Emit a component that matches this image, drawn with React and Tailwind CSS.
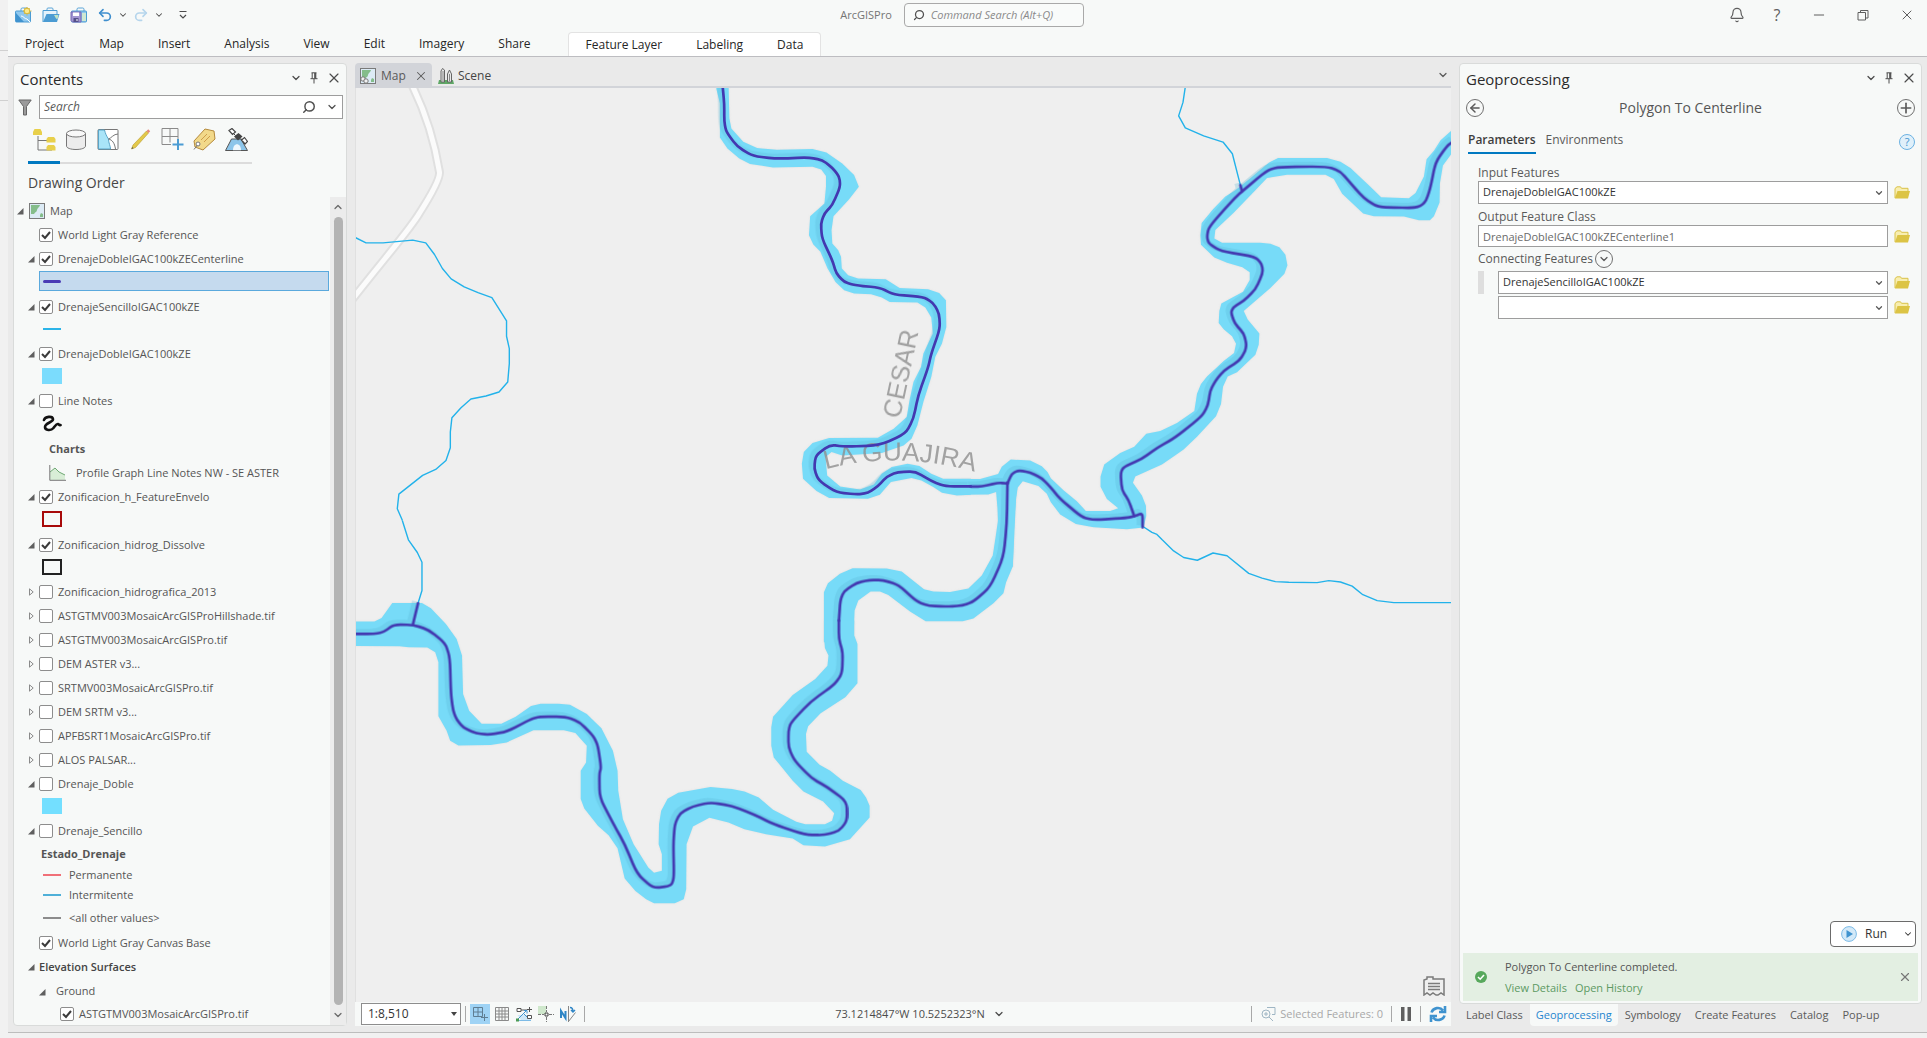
import React from "react";
import { ChevronDown, ChevronUp, Search, X, Bell, Minus, Plus, ArrowLeft, Undo2, Redo2 } from "lucide-react";

const Caret = ({ className = "size-3" }) => <ChevronDown aria-hidden="true" strokeWidth={2.5} className={className} />;

const SearchGlyph = ({ className = "size-4" }) => (
  <Search aria-hidden="true" strokeWidth={2.5} className={`-scale-x-100 text-[#505050] ${className}`} />
);

const PinIcon = () => (
  <svg viewBox="0 0 12 12" className="size-3" fill="none" stroke="#4c4c4c">
    <path d="M3.5 .8h5M4.2 1v5.5M7.8 1v5.5M2.5 6.7h7M6 7v4.5" />
    <path d="M7 1v5.5" strokeWidth="1.6" />
  </svg>
);

const CaseBase = () => (
  <>
    <path d="M7 4V2.2C7 1.5 7.500 1 8.200 1h4.600C13.500 1 14 1.500 14 2.200V4" fill="none" stroke="#5aa5d8" />
    <rect x="1.500" y="4" width="15" height="11" rx=".8" fill="#8fc8ee" stroke="#4b9cd3" />
  </>
);

const NewProjectIcon = () => (
  <svg viewBox="0 0 18 16" className="h-4 w-[18px]">
    <CaseBase />
    <path d="M2 15V6l8 9Z" fill="#3f93cf" />
    <path d="M7 9c3 0 3 3 6 3l3 3" fill="none" stroke="#fff" />
    <circle cx="13" cy="4" r="2.800" fill="#fbe98a" stroke="#d9b632" />
    <path d="M13 0v1M13 7.500v1M9 4h1M16.500 4h1M10.200 1.200l.7.7M15.200 6.200l.7.7M15.800 1.200l-.7.7M10.800 6.200l-.7.7" stroke="#d9b632" />
  </svg>
);

const OpenProjectIcon = () => (
  <svg viewBox="0 0 18 16" className="h-4 w-[18px]">
    <path d="M5 3V2c0-.6.400-1 1-1h4c.6 0 1 .4 1 1v1" fill="none" stroke="#5aa5d8" />
    <path d="M1 15V3.500h14V7" fill="#e4f2fb" stroke="#4b9cd3" />
    <path d="M1 15 4.500 7H17.500L15 15Z" fill="#4b9cd3" />
    <path d="M12 8h4.500l-1 4c-2 0-2-2-3.500-4Z" fill="#bfe3c4" />
  </svg>
);

const SaveProjectIcon = () => (
  <svg viewBox="0 0 18 16" className="h-4 w-[18px]">
    <CaseBase />
    <path d="M12 6h4v8h-4z" fill="#cfe8d2" />
    <path d="M1 5h10v10H2.500L1 13.500Z" fill="#a296d2" stroke="#7467b3" />
    <path d="M3 5.500h6v3.500H3z" fill="#fff" />
    <path d="M3.500 11h5v4h-5z" fill="#55508a" />
    <path d="M6.500 12h1v2h-1z" fill="#fff" />
  </svg>
);

const MapThumb = ({ link = false }) => (
  <svg viewBox="0 0 16 16" className="size-4 shrink-0">
    <rect x=".5" y=".5" width="15" height="15" fill="#dcebf5" stroke="#7a7a7a" />
    <path d="M2 2h9c0 2-3 3-3 5s-2 2-3 4H2Z" fill="#84bd8a" />
    <path d="M12 10l2 1v3h-3v-2Z" fill="#84bd8a" />
    {link && (
      <g fill="#f2f2f2" stroke="#777">
        <circle cx="3" cy="11" r="2.200" />
        <circle cx="6" cy="13" r="2.200" />
      </g>
    )}
  </svg>
);

const SceneIcon = () => (
  <svg viewBox="0 0 16 16" className="size-4 shrink-0">
    <path d="M1 12h14l1 4H0Z" fill="#5fa866" />
    <path d="M3 14V3l1.500-2.500L6.500 2v12ZM9.500 14V6l2-4 2 4v8Z" fill="#e8e8e8" stroke="#666" />
    <path d="M5 3v10M11.500 6v7" stroke="#888" />
  </svg>
);

const Folder = () => (
  <svg viewBox="0 0 16 13" className="h-[13px] w-4">
    <path d="M1 12V2.500L3 .8h3.500l1 1.500H14V5" fill="#f8eeb0" stroke="#d9c24a" />
    <path d="M.8 12.500 3.500 5H16l-2 7.500Z" fill="#dcc445" />
  </svg>
);

/* ---------- title bar and ribbon tabs ---------- */

function IconButton({ label, className = "", children }) {
  return (
    <button type="button" aria-label={label} className={`flex items-center justify-center ${className}`}>
      {children}
    </button>
  );
}

function TitleBar() {
  return (
    <div className="flex h-[30px] items-center pl-px pr-3">
      <div className="flex flex-1 items-center">
        <IconButton label="New project" className="w-7"><NewProjectIcon /></IconButton>
        <IconButton label="Open project" className="w-7"><OpenProjectIcon /></IconButton>
        <IconButton label="Save project" className="w-7"><SaveProjectIcon /></IconButton>
        <IconButton label="Undo" className="w-6 text-[#3f8fce]"><Undo2 strokeWidth={2.5} className="size-4" /></IconButton>
        <IconButton label="Undo list" className="w-3 text-[#4c4c4c]"><Caret className="size-2.5" /></IconButton>
        <IconButton label="Redo" className="w-6 text-[#b5d5ec]"><Redo2 strokeWidth={2.5} className="size-4" /></IconButton>
        <IconButton label="Redo list" className="w-3 text-[#4c4c4c]"><Caret className="size-2.5" /></IconButton>
        <IconButton label="Customize toolbar" className="ml-2 w-5 text-[#4c4c4c]">
          <svg viewBox="0 0 10 10" className="size-2.5" fill="none" stroke="currentColor">
            <path d="M1.500 1.500h7M2 5l3 3 3-3" strokeWidth="1.200" />
          </svg>
        </IconButton>
      </div>
      <div className="flex items-center gap-3">
        <span className="text-[11px] text-[#757575]">ArcGISPro</span>
        <label className="flex h-6 w-[180px] items-center gap-1.5 rounded-sm border border-[#a9a9a9] bg-[#f9fbfa] px-2">
          <SearchGlyph className="size-3" />
          <input
            type="text"
            aria-label="Command search"
            placeholder="Command Search (Alt+Q)"
            className="min-w-0 flex-1 bg-transparent text-[11px] italic outline-none placeholder:text-[#8a8a8a]"
          />
        </label>
      </div>
      <div className="flex flex-1 items-center justify-end text-[#5e5e5e]">
        <IconButton label="Notifications" className="w-10"><Bell strokeWidth={1.75} className="size-4" /></IconButton>
        <IconButton label="Help" className="w-10 text-base">?</IconButton>
        <IconButton label="Minimize" className="w-11"><Minus strokeWidth={1.5} className="size-4" /></IconButton>
        <IconButton label="Restore" className="w-11">
          <svg viewBox="0 0 12 12" className="size-3" fill="none" stroke="currentColor">
            <path d="M1 3.500h7.500V11H1zM3.500 3.500V1.500H11V9H8.500" />
          </svg>
        </IconButton>
        <IconButton label="Close" className="w-[30px] justify-end"><X strokeWidth={1.5} className="size-4" /></IconButton>
      </div>
    </div>
  );
}

const MAIN_TABS = ["Map", "Insert", "Analysis", "View", "Edit", "Imagery", "Share"];
const CONTEXT_TABS = ["Feature Layer", "Labeling", "Data"];

function Ribbon() {
  return (
    <nav className="flex h-[27px] items-stretch border-b border-[#bdbdc1] pt-0.5 text-xs text-[#262626]">
      <button type="button" className="mr-px px-[17px]">Project</button>
      {MAIN_TABS.map((t) => (
        <button key={t} type="button" className="px-[17px]">{t}</button>
      ))}
      <div className="ml-5 flex rounded-t-sm border border-b-0 border-[#e3e3e3] bg-white">
        {CONTEXT_TABS.map((t) => (
          <button key={t} type="button" className="px-[17px]">{t}</button>
        ))}
      </div>
    </nav>
  );
}

/* ---------- contents pane ---------- */

function PaneHeader({ title }) {
  return (
    <div className="flex h-[31px] items-center justify-between pl-1.5 pr-1">
      <h2 className="text-[15px] text-[#2b2b2b]">{title}</h2>
      <div className="flex items-center gap-1.5 pb-1 text-[#4c4c4c]">
        <IconButton label={`${title} options`}><Caret /></IconButton>
        <IconButton label={`Pin ${title}`}><PinIcon /></IconButton>
        <IconButton label={`Close ${title}`}><X strokeWidth={1.75} className="size-4" /></IconButton>
      </div>
    </div>
  );
}

const LIST_ICONS = [
  ["List by drawing order", (
    <g key="a">
      <path d="M5 8v14h14M5 12.500h12" fill="none" stroke="#777" />
      <path d="M1.500 1h6l1.500 3v3H0V4ZM15 9h6l1.500 2v3.500h-9V11ZM15 17h6l1.500 2v3.500h-9V19Z" fill="#e8d04b" />
    </g>
  )],
  ["List by data source", (
    <g key="b" fill="#ececec" stroke="#777">
      <path d="M1.500 5.500v12.500c0 2 4 3.500 9.500 3.500s9.500-1.500 9.500-3.500V5.500" />
      <ellipse cx="11" cy="5.500" rx="9.500" ry="3.500" fill="#f8f8f8" />
    </g>
  )],
  ["List by selection", (
    <g key="c" stroke="#777">
      <rect x="1" y="1.500" width="20" height="20" rx="1" fill="#fff" />
      <path d="M1.500 2h6c1 4 2 6 4 9 0 4 2 7 2 10h-12Z" fill="#a9e4f8" stroke="#5aa5c8" />
      <path d="M11.500 11c3-1 5-5 9.500-5M11.500 11c4 1 6 4 7 10" fill="none" />
    </g>
  )],
  ["List by editing", (
    <g key="d">
      <path d="M2.500 21l1.500-4L17.500 3l2 2L6.500 19.500Z" fill="#e3c94a" stroke="#b89a2c" strokeWidth=".6" />
      <path d="M17.500 3l1.700-1.700 2 2L19.500 5Z" fill="#e58a7c" />
      <path d="M2.500 21l.8-2 1.200 1.200Z" fill="#555" />
    </g>
  )],
  ["List by snapping", (
    <g key="e" fill="none" stroke="#8a8a8a">
      <path d="M1 .5h16v11M1 .5v16h9M9 .5v14M1 8.500h16" />
      <path d="M17 11v11M11.500 16.500h11" stroke="#4b9cd3" strokeWidth="2" />
    </g>
  )],
  ["List by labeling", (
    <g key="f">
      <path d="M1 13 12 1l9 2 1 8-12 11-8-3Z" fill="#f2d98a" stroke="#b58a3c" />
      <path d="M8 12l6-6M11 14l6-6" stroke="#cf9d4a" />
      <circle cx="5" cy="16" r="2" fill="#fff" stroke="#777" />
      <path d="M4 17.500 1 21.500" stroke="#777" />
    </g>
  )],
  ["List by perspective imagery", (
    <g key="g">
      <path d="M.5 22.500 6.500 11h9.500l6.500 11.500Z" fill="#8cc5ea" stroke="#555" />
      <path d="M8 22.300c0-8 8-8 8 0Z" fill="#eef7fd" />
      <path d="M9 8.500 13.500 5l4 3.500-4.500 4Z" fill="#444" />
      <path d="M4 2.500l3-2 3.500 3.500-3 2.500ZM16.500 12l3-2.500 3 4-2.500 2.500Z" fill="#fff" stroke="#444" strokeWidth="1.200" />
      <path d="M8.500 5.500l2 2M16 10.500l1.500 1.500" stroke="#444" />
    </g>
  )],
];

function Twisty({ open }) {
  return (
    <svg viewBox="0 0 8 8" className="size-2 shrink-0">
      {open ? (
        <path d="M7.500 1v6.500H1Z" fill="#5f5f5f" />
      ) : (
        <path d="M2.500.8v6.400L6.200 4Z" fill="none" stroke="#8a8a8a" />
      )}
    </svg>
  );
}

function Check({ checked }) {
  return (
    <span className="relative flex size-3.5 shrink-0">
      <input
        type="checkbox"
        defaultChecked={checked}
        className="peer size-3.5 appearance-none rounded-xs border border-[#8d8d8d] bg-white"
      />
      <svg viewBox="0 0 14 14" className="pointer-events-none absolute inset-0 hidden peer-checked:block" fill="none" stroke="#3b3b3b" strokeWidth="2">
        <path d="M3 7l3 3 5-6" />
      </svg>
    </span>
  );
}

function Layer({ name, checked = false, open }) {
  return (
    <div className="flex h-6 items-center pl-[13px]">
      <span className="flex w-3 shrink-0">{open !== undefined && <Twisty open={open} />}</span>
      <label className="flex items-center gap-[5px] whitespace-nowrap">
        <Check checked={checked} />
        {name}
      </label>
    </div>
  );
}

const Swatch = ({ className }) => (
  <div className="flex h-[23px] items-start pl-7 pt-0.5">
    <span className={`h-4 w-5 ${className}`} />
  </div>
);

const Dash = ({ className }) => <span className={`w-[18px] shrink-0 ${className}`} />;

function Contents() {
  return (
    <aside className="flex w-[334px] shrink-0 flex-col rounded-sm border border-[#d9dbda] bg-[#f7f9f8]">
      <PaneHeader title="Contents" />
      <div className="flex items-center pr-[3px]">
        <svg viewBox="0 0 14 17" className="mx-1 h-[17px] w-3.5 shrink-0">
          <path d="M.8 1h12.400L8.500 7.500V16h-3V7.500Z" fill="#9b9b9b" stroke="#666" />
        </svg>
        <label className="ml-[3px] flex h-6 flex-1 items-center gap-2.5 border border-[#9d9d9d] bg-white px-1 text-[#505050]">
          <input type="text" aria-label="Search contents" placeholder="Search" className="min-w-0 flex-1 bg-transparent text-xs italic outline-none placeholder:text-[#5c5c5c]" />
          <SearchGlyph className="size-3.5" />
          <Caret />
        </label>
      </div>
      <div className="ml-3.5 mt-[9px] flex h-9 w-56 border-b-2 border-[#dcdcdc]">
        {LIST_ICONS.map(([label, art], i) => (
          <button
            key={label}
            type="button"
            aria-label={label}
            className={i === 0 ? "-mb-0.5 flex h-9 w-8 justify-center border-b-[3px] border-[#0079c1]" : "flex w-8 justify-center"}
          >
            <svg viewBox="0 0 23 23" className="size-[23px]">{art}</svg>
          </button>
        ))}
      </div>
      <h3 className="mt-[7px] pl-3.5 text-sm font-medium leading-6 text-[#474747]">Drawing Order</h3>
      <div className="mt-0.5 flex min-h-0 flex-1 text-[11px] text-[#555]">
        <div className="min-w-0 flex-1 overflow-hidden pt-0.5">
          <div className="flex h-6 items-center gap-[5px] pl-0.5">
            <Twisty open />
            <MapThumb />
            Map
          </div>
          <Layer name="World Light Gray Reference" checked />
          <Layer name="DrenajeDobleIGAC100kZECenterline" checked open />
          <div className="mb-1 ml-[25px] mr-px flex h-5 items-center border border-[#5aa9dd] bg-[#c5daee] pl-[3px]">
            <Dash className="h-[3px] rounded-full bg-[#4a3bb5]" />
          </div>
          <Layer name="DrenajeSencilloIGAC100kZE" checked open />
          <div className="flex h-[23px] items-center pl-[29px] pb-1"><Dash className="h-0.5 bg-[#2bb4e8]" /></div>
          <Layer name="DrenajeDobleIGAC100kZE" checked open />
          <Swatch className="bg-[#7bdcfd]" />
          <Layer name="Line Notes" open />
          <div className="flex h-6 items-start pl-7 pt-0.5">
            <svg viewBox="0 0 20 17" className="h-[17px] w-5" fill="none" stroke="#111" strokeWidth="2.600" strokeLinecap="round">
              <path d="M2 5c1-3.500 8.500-4.500 9-.8C11.300 7.500 3 7.500 3 12c0 3.500 6 4 8.500 1 2-2.500 3-4.500 4.500-4 1.500.500 1 1.500 2.500 1" />
            </svg>
          </div>
          <div className="flex h-6 items-center pl-[35px] font-bold">Charts</div>
          <div className="flex h-6 items-center gap-2.5 pl-[35px]">
            <svg viewBox="0 0 17 16" className="h-4 w-[17px]">
              <path d="M1 15V7l5-4 4 4 6 3v5Z" fill="#d8edd6" />
              <path d="M1 7l5-4 4 4 6 3" fill="none" stroke="#6ea873" />
              <path d="M.8 0v15.300H17" fill="none" stroke="#777" />
            </svg>
            Profile Graph Line Notes NW - SE ASTER
          </div>
          <Layer name="Zonificacion_h_FeatureEnvelo" checked open />
          <div className="mb-px"><Swatch className="border-2 border-[#a80a0a]" /></div>
          <Layer name="Zonificacion_hidrog_Dissolve" checked open />
          <Swatch className="border-2 border-[#222]" />
          <Layer name="Zonificacion_hidrografica_2013" open={false} />
          <Layer name="ASTGTMV003MosaicArcGISProHillshade.tif" open={false} />
          <Layer name="ASTGTMV003MosaicArcGISPro.tif" open={false} />
          <Layer name="DEM ASTER v3..." open={false} />
          <Layer name="SRTMV003MosaicArcGISPro.tif" open={false} />
          <Layer name="DEM SRTM v3..." open={false} />
          <Layer name="APFBSRT1MosaicArcGISPro.tif" open={false} />
          <Layer name="ALOS PALSAR..." open={false} />
          <Layer name="Drenaje_Doble" open />
          <Swatch className="bg-[#73dfff]" />
          <Layer name="Drenaje_Sencillo" open />
          <div className="flex h-[22px] items-center pl-[27px] font-bold">Estado_Drenaje</div>
          <div className="flex h-5 items-center gap-2 pl-[29px]"><Dash className="h-0.5 bg-[#f07078]" />Permanente</div>
          <div className="flex h-5 items-center gap-2 pl-[29px]"><Dash className="h-0.5 bg-[#4fb0d8]" />Intermitente</div>
          <div className="flex h-[26px] items-center gap-2 pl-[29px]"><Dash className="h-0.5 bg-[#8c8c8c]" />&lt;all other values&gt;</div>
          <Layer name="World Light Gray Canvas Base" checked />
          <div className="flex h-6 items-center gap-1 pl-[13px] font-semibold text-[#444]"><Twisty open />Elevation Surfaces</div>
          <div className="flex h-[25px] items-center gap-2.5 pl-6"><Twisty open />Ground</div>
          <label className="flex h-5 items-center gap-[5px] pl-[46px]"><Check checked />ASTGTMV003MosaicArcGISPro.tif</label>
        </div>
        <div className="flex w-4 flex-col items-center gap-1 bg-[#ececec] py-1 text-[#6a6a6a]">
          <ChevronUp strokeWidth={2.5} className="size-3" />
          <div className="w-[9px] flex-1 rounded-full bg-[#b3b3b3]" />
          <Caret />
        </div>
      </div>
    </aside>
  );
}

/* ---------- map ---------- */

const BANKS_NORTH =
  "927,20 927,27 936,70 936,172 955,205 985,235 1012,252 1070,262 1170,260 1192,268 1204,288 1204,320 1200,370 1164,408 1161,465 1172,493 1190,515 1208,565 1228,605 1250,630 1275,640 1318,642 1345,652 1365,665 1435,667 1455,682 1470,712 1474,760 1450,820 1444,860 1425,905 1415,960 1408,1010 1375,1045 1335,1072 1212,1073 1170,1088 1148,1115 1143,1150 1146,1195 1180,1232 1212,1253 1310,1255 1340,1243 1368,1205 1420,1193 1445,1200 1475,1220 1497,1237 1535,1245 1570,1243 1570,1195 1500,1195 1470,1180 1440,1157 1410,1150 1370,1160 1345,1180 1325,1212 1290,1227 1240,1218 1207,1185 1203,1130 1218,1115 1245,1125 1345,1118 1400,1095 1420,1075 1435,1035 1450,965 1470,890 1480,830 1497,790 1508,740 1507,660 1490,638 1462,627 1390,623 1355,597 1285,595 1260,585 1244,565 1242,530 1235,510 1220,490 1218,450 1223,408 1262,358 1287,320 1275,285 1245,250 1205,217 1170,207 1080,209 1030,204 995,185 965,145 960,115 958,20";

const BANKS_EAST =
  "0,1157 60,1157 114,1143 125,1122 152,1101 210,1104 245,1120 262,1137 272,1155 310,1190 350,1222 377,1250 450,1250 474,1242 440,1215 421,1180 421,1150 432,1115 480,1082 522,1064 558,1026 600,1018 650,995 702,960 710,910 722,882 740,860 790,815 821,792 827,765 815,743 790,723 775,705 777,670 783,648 848,614 868,580 868,558 846,543 800,530 762,515 722,478 720,450 724,415 758,375 795,338 825,320 870,285 925,240 953,226 1100,226 1140,237 1170,255 1225,305 1262,340 1345,343 1365,328 1390,280 1398,230 1420,205 1440,175 1480,140 1480,205 1447,248 1438,300 1437,355 1420,395 1408,407 1375,407 1330,396 1240,395 1208,387 1145,330 1120,287 1095,275 980,275 920,284 880,325 820,385 765,435 762,460 785,472 900,472 930,475 957,485 975,507 981,537 972,562 930,603 850,670 862,695 897,735 895,768 885,797 830,848 802,860 788,890 782,940 767,975 710,1035 670,1072 640,1092 605,1115 525,1150 518,1168 545,1205 557,1235 558,1265 550,1298 500,1303 400,1297 347,1288 300,1260 272,1225 260,1200 235,1178 188,1164 173,1182 168,1210 163,1310 158,1412 100,1380 108,1330 114,1290 112,1240 108,1195 85,1202 0,1203";

const BANKS_MIDDLE =
  "711,200 703,290 698,438 678,485 670,518 640,548 580,594 548,602 437,602 390,573 325,523 300,513 272,513 235,540 224,570 221,645 229,665 132,665 132,515 144,488 180,460 218,443 320,444 365,453 432,506 460,513 510,514 565,504 605,465 638,405 648,340 655,290 652,230";

const BANKS_SOUTH =
  "1328,180 1328,235 1330,262 1340,285 1337,315 1303,355 1240,403 1185,468 1180,500 1180,555 1187,590 1240,660 1270,692 1325,722 1356,757 1350,780 1330,790 1275,790 1250,783 1185,747 1145,710 1105,692 1070,685 1010,679 920,696 890,714 872,750 866,790 865,850 874,880 874,930 852,936 836,920 795,850 765,775 752,690 750,630 737,570 705,503 664,460 617,432 585,429 535,429 508,436 465,468 425,489 370,489 335,450 318,400 315,285 300,235 270,190 228,143 203,127 120,127 90,172 70,183 10,183 10,256 140,257 165,260 218,261 240,275 249,305 249,467 272,510 282,540 305,554 395,553 440,545 515,509 600,509 632,517 664,555 662,605 647,630 647,715 657,743 695,795 725,823 750,862 770,953 800,990 830,1015 852,1027 910,1027 935,1015 942,985 943,850 961,797 1007,771 1060,785 1105,805 1165,820 1240,833 1270,853 1330,857 1400,835 1455,770 1455,735 1445,710 1430,688 1380,660 1345,630 1315,612 1279,573 1277,520 1283,497 1318,458 1387,410 1421,368 1421,250 1412,225 1412,180";

const SURVEY_SHEETS = [
  {
    id: "north",
    transform: "translate(350 80) scale(.395408 .333333)",
    banks: BANKS_NORTH,
    centers: [
      "943,20 947,70 947,125 952,155 980,200 1020,228 1080,236 1160,232 1195,240 1220,263 1238,290 1240,320 1220,375 1200,400 1191,430 1194,475 1220,540 1230,580 1250,605 1275,615 1340,622 1375,643 1450,650 1475,668 1490,700 1492,745 1470,820 1462,862 1437,945 1425,1015 1405,1060 1340,1095 1250,1099 1215,1093 1178,1125 1174,1165 1185,1200 1230,1236 1285,1242 1310,1237 1335,1218 1358,1188 1385,1175 1430,1173 1470,1202 1505,1218 1570,1218",
    ],
    streams: [
      "13,471 42,488 85,488 160,480 193,488 215,523 235,565 257,596 290,620 325,637 360,652 397,722 397,768 404,805 404,850 400,905 378,935 345,947 307,956 282,982 259,1012 255,1055 255,1102 244,1140 218,1167 185,1185 125,1241 121,1285 134,1320",
    ],
  },
  {
    id: "east",
    transform: "translate(960 80) scale(.333333 .344388)",
    banks: BANKS_EAST,
    centers: [
      "33,1179 65,1179 115,1168 142,1170",
      "1480,177 1460,190 1425,238 1410,310 1397,350 1380,366 1355,371 1270,369 1245,365 1210,342 1175,305 1140,265 1100,251 955,252 920,262 845,323 820,345 745,427 740,455 745,474 780,496 885,513 905,535 907,560 885,608 850,640 818,660 812,675 823,706 850,735 858,765 855,785 838,813 790,843 765,873 750,900 743,943 725,975 645,1037 590,1067 545,1099 490,1122 481,1140 485,1190 505,1218 522,1265",
      "840,305 845,323",
      "547,1297 547,1256 522,1265 500,1270 400,1276 365,1268 300,1215 270,1180 245,1155 210,1138 175,1132 155,1142 142,1170",
    ],
    streams: [
      "675,20 668,65 655,104 675,139 730,162 788,180 816,214 840,305",
      "548,1295 575,1312 590,1318 605,1333 640,1366 670,1385 711,1393 758,1372 800,1380 865,1431 905,1445 945,1455 985,1457 1070,1458 1105,1452 1140,1456 1175,1468 1207,1493 1250,1510 1300,1516 1480,1516",
    ],
  },
  {
    id: "middle",
    transform: "translate(780 420) scale(.333333)",
    banks: BANKS_MIDDLE,
    centers: [
      "682,188 680,310 670,410 630,500 580,543 548,555 500,558 447,556 410,543 355,493 310,479 270,478 230,487 192,512 181,540 177,600",
    ],
    streams: [],
  },
  {
    id: "south",
    transform: "translate(350 560) scale(.357143 .333333)",
    banks: BANKS_SOUTH,
    centers: [
      "1369,180 1369,235 1380,275 1378,340 1355,373 1290,423 1235,485 1228,510 1228,560 1245,600 1293,653 1335,678 1391,722 1392,780 1370,810 1330,823 1275,822 1185,790 1130,760 1070,735 1010,725 960,737 925,757 910,790 906,850 908,950 900,975 850,982 805,940 770,850 735,783 700,710 699,640 704,620 695,555 683,527 645,485 605,468 530,468 505,477 440,513 390,522 355,518 320,502 300,477 290,450 284,400 281,290 268,248 222,208 180,193 125,192 95,215 70,220 10,220",
      "192,128 178,190",
    ],
    streams: ["148,-120 165,-62 190,-24 203,5 203,90 192,128"],
  },
];

/* Turns a list of surveyed vertices into a path whose corners are rounded off. */
function smoothPath(points) {
  const p = points.split(" ").map((s) => s.split(",").map(Number));
  let d = `M${p[0]}`;
  for (let i = 1; i < p.length - 1; i++) {
    const [x, y] = p[i];
    const a = [x + (p[i - 1][0] - x) * 0.35, y + (p[i - 1][1] - y) * 0.35];
    const b = [x + (p[i + 1][0] - x) * 0.35, y + (p[i + 1][1] - y) * 0.35];
    d += `L${a}Q${p[i]} ${b}`;
  }
  return `${d}L${p[p.length - 1]}`;
}

const ROAD = "M412 84C424 108 434 135 440 172Q441 180 420 213C410 230 385 258 350 303";

function MapCanvas() {
  return (
    <svg
      role="img"
      aria-label="Rivers and their centerlines"
      viewBox="355 88 1097 913"
      preserveAspectRatio="xMidYMin slice"
      className="min-h-0 w-full flex-1 bg-[#efefef]"
    >
      <defs>
        <path id="guajira-baseline" d="M826 469Q902 448 990 476" />
        <filter id="relief"><feGaussianBlur stdDeviation="2.500" /></filter>
      </defs>
      <g fill="none" strokeLinejoin="round">
        <path d={ROAD} stroke="#e0e0e0" strokeWidth="9" />
        <path d={ROAD} stroke="#fbfbfb" strokeWidth="5" />
      </g>
      {SURVEY_SHEETS.map((s) => (
        <g key={s.id} transform={s.transform}>
          <polygon points={s.banks} fill="#d4d4d4" opacity=".55" filter="url(#relief)" />
        </g>
      ))}
      {SURVEY_SHEETS.map((s) => (
        <g key={s.id} transform={s.transform} fill="none" strokeLinejoin="round">
          <polygon points={s.banks} fill="#77dbf8" />
          {s.streams.map((p) => (
            <polyline key={p} points={p} stroke="#22b2ea" strokeWidth="1.400" vectorEffect="non-scaling-stroke" />
          ))}
        </g>
      ))}
      <g transform="translate(-3 -2)" opacity=".3">
        {SURVEY_SHEETS.map((s) => (
          <g key={s.id} transform={s.transform} fill="none" stroke="#5bb8d6" strokeLinejoin="round">
            {s.centers.map((p) => (
              <path key={p} d={smoothPath(p)} strokeWidth="6" vectorEffect="non-scaling-stroke" />
            ))}
          </g>
        ))}
      </g>
      <g fill="#8f8f8f" fillOpacity=".8" fontFamily="Liberation Sans, Arial, sans-serif" fontSize="26">
        <text transform="translate(900 419) rotate(-78)">CESAR</text>
        <text>
          <textPath href="#guajira-baseline">LA GUAJIRA</textPath>
        </text>
      </g>
      {SURVEY_SHEETS.map((s) => (
        <g key={s.id} transform={s.transform} fill="none" stroke="#4338b0" strokeLinejoin="round" strokeLinecap="round">
          {s.centers.map((p) => (
            <path key={p} d={smoothPath(p)} strokeWidth="2.700" vectorEffect="non-scaling-stroke" />
          ))}
        </g>
      ))}
    </svg>
  );
}

const Divider = () => <span className="h-4 w-px bg-[#a8a8a8]" />;

const STATUS_TOOLS = [
  ["Snapping", <path key="p" d="M1.500 1.500h9v9h-9zM6 1.500v9M1.500 6h9M12.500 8v7M9 11.500h7" fill="none" stroke="#5f7d92" />],
  ["Grid", <path key="p" d="M1.500 1.500h13v13h-13zM5 1.500v13M8 1.500v13M11 1.500v13M1.500 5h13M1.500 8h13M1.500 11h13" fill="none" stroke="#8a8a8a" />],
  ["Topology", (
    <g key="p">
      <path d="M1.500 9 5 14h10V9Z" fill="#cfe8f8" />
      <path d="M1 2.500h4v3H1zM11.500 9.500h4v3h-4z" fill="#fff" stroke="#555" />
      <path d="M5 4h6M13.500 1v5M11 3.500h5" stroke="#555" />
      <path d="M2 13 10 5M8 4.500h3v3M8 8l3 3" fill="none" stroke="#3f93cf" />
      <path d="M0 12.500h3v3H0z" fill="#4c9a55" />
      <path d="M3 14.500h12" stroke="#7dbbe6" />
    </g>
  )],
  ["Correction", (
    <g key="p">
      <path d="M0 0h8v8H0z" fill="#cfe8cc" />
      <path d="M8.500 0v6M8.500 11v5M0 8.500h6M11 8.500h5" stroke="#777" strokeDasharray="3 1" />
      <path d="M7 7h3v3H7z" fill="none" stroke="#444" />
    </g>
  )],
  ["Inference", (
    <g key="p" fill="none">
      <path d="M1 12V5l4.500 7V5" stroke="#2f86c6" strokeWidth="2" />
      <path d="M8.500 0v16M8.500 15.500l7-9" stroke="#888" />
      <path d="M10 1.500c2 0 3 1.500 3 4m-2-1.500 2 2 2-2" stroke="#2f86c6" strokeWidth="1.400" />
    </g>
  )],
];

function StatusBar() {
  return (
    <div className="flex h-6 shrink-0 items-center gap-2 bg-[#f7f9f8] pl-1.5 pr-1 text-[11px] text-[#4c4c4c]">
      <div className="flex flex-1 items-center gap-1">
        <span className="relative flex items-center">
          <select aria-label="Map scale" className="h-[22px] w-[100px] appearance-none border border-[#8d8d8d] bg-white px-1.5 text-xs text-[#333]">
            <option>1:8,510</option>
          </select>
          <svg viewBox="0 0 6 4" className="pointer-events-none absolute right-1 h-1 w-1.5"><path d="M0 0h6L3 4Z" fill="#444" /></svg>
        </span>
        <div className="flex items-center gap-0.5">
          <Divider />
          {STATUS_TOOLS.map(([label, art], i) => (
            <IconButton key={label} label={label} className={i === 0 ? "ml-0.5 size-5 bg-[#9fd3f5]" : "size-5"}>
              <svg viewBox="0 0 16 16" className="size-4">{art}</svg>
            </IconButton>
          ))}
          <span className="ml-1 flex"><Divider /></span>
        </div>
      </div>
      <button type="button" className="flex items-center gap-2 pl-8">
        73.1214847°W 10.5252323°N <Caret />
      </button>
      <div className="flex flex-1 items-center justify-end gap-2">
        <Divider />
        <button type="button" className="flex items-center gap-1 text-[#a8a8a8]">
          <svg viewBox="0 0 16 16" className="size-4" fill="none" stroke="#9fb6c4">
            <path d="M7 1.500h8v7h-3" />
            <circle cx="6" cy="8" r="4" />
            <path d="M4 8h4M6 6v4M9 11l4 4" />
          </svg>
          Selected Features: 0
        </button>
        <Divider />
        <IconButton label="Pause drawing">
          <svg viewBox="0 0 12 14" className="h-3.5 w-3"><path d="M1 0h3.500v14H1zM7.500 0H11v14H7.500z" fill="#5f5f5f" /></svg>
        </IconButton>
        <Divider />
        <IconButton label="Refresh">
          <svg viewBox="0 0 18 18" className="size-[18px]" fill="none" stroke="#3f93cf" strokeWidth="2.600">
            <path d="M2.500 7.500C4 2.500 11 1.500 14 5.500M16 1v6h-6M15.500 10.500C14 15.500 7 16.500 4 12.500M2 17v-6h6" />
          </svg>
        </IconButton>
      </div>
    </div>
  );
}

function MapView() {
  return (
    <main className="flex min-w-0 flex-1 flex-col">
      <div className="flex h-[25px] shrink-0 items-stretch border-b-2 border-[#d2d4d9] text-xs text-[#5a5a5a]">
        <div className="flex w-[77px] items-center gap-[5px] rounded-t-sm bg-[#d2d4d9] pl-[5px] pt-0.5">
          <MapThumb link />
          <span className="flex-1">Map</span>
          <IconButton label="Close map" className="pr-1"><X strokeWidth={1.75} className="size-3.5" /></IconButton>
        </div>
        <button type="button" className="flex items-center gap-1 px-1.5 pt-0.5 text-[#444]">
          <SceneIcon />
          Scene
        </button>
        <IconButton label="Open views" className="ml-auto pr-0.5"><Caret /></IconButton>
      </div>
      <div className="relative flex min-h-0 flex-1 flex-col border-l border-[#e0e0e0]">
        <MapCanvas />
        <button type="button" aria-label="Notes" className="absolute bottom-1.5 right-1.5">
          <svg viewBox="0 0 22 20" className="h-5 w-[22px]" fill="none" stroke="#7b7b7b" strokeWidth="1.500">
            <path d="M1 19V4l3-1V1h6v2h11v16l-3-2-3 2h-2l-3-2-3 2H7l-3-2Z" />
            <path d="M5 7.500h12M5 10.500h12M5 13.500h12" />
          </svg>
        </button>
      </div>
      <StatusBar />
    </main>
  );
}

/* ---------- geoprocessing pane ---------- */

function Combo({ id, label, value, muted }) {
  return (
    <div className="flex items-center gap-1.5 text-[11px]">
      <span className="relative flex flex-1 items-center text-[#5a5a5a]">
        {muted ? (
          <input id={id} type="text" defaultValue={value} className="h-[22px] w-full border border-[#9d9d9d] bg-white px-1 text-[#6a6a6a]" />
        ) : (
          <>
            <select id={id} aria-label={label} className="h-[23px] w-full appearance-none border border-[#9d9d9d] bg-white px-1 text-[#333]">
              <option>{value}</option>
            </select>
            <ChevronDown strokeWidth={3} className="pointer-events-none absolute right-1 size-2.5" />
          </>
        )}
      </span>
      <IconButton label={`Browse ${label || id}`}><Folder /></IconButton>
    </div>
  );
}

const DOCK_TABS = ["Label Class", "Geoprocessing", "Symbology", "Create Features", "Catalog", "Pop-up"];

function Geoprocessing() {
  return (
    <aside className="flex w-[463px] shrink-0 flex-col text-[11px] text-[#5a5a5a]">
      <div className="flex min-h-0 flex-1 flex-col rounded-sm border border-[#d9dbda] bg-[#f7f9f8]">
        <PaneHeader title="Geoprocessing" />
        <div className="flex h-[25px] items-center justify-between px-1.5">
          <IconButton label="Back" className="size-[18px] rounded-full border border-[#707070]"><ArrowLeft strokeWidth={2.5} className="size-3.5" /></IconButton>
          <h3 className="text-sm text-[#555]">Polygon To Centerline</h3>
          <IconButton label="Add" className="size-[18px] rounded-full border border-[#707070]"><Plus strokeWidth={2.5} className="size-4 shrink-0" /></IconButton>
        </div>
        <div className="flex h-[34px] items-end justify-between pl-2 pr-1.5">
          <div className="flex gap-2.5 text-xs">
            <button type="button" className="border-b-2 border-[#0079c1] pb-1 font-semibold text-[#3f3f3f]">Parameters</button>
            <button type="button" className="border-b-2 border-transparent pb-1">Environments</button>
          </div>
          <IconButton label="Tool help" className="mb-1 size-4 rounded-full border border-[#6cb2e2] bg-[#e0f0fa] text-[11px] text-[#3f93cf]">?</IconButton>
        </div>
        <div className="flex flex-1 flex-col pl-[18px] pr-[11px] pt-2.5 text-xs">
          <label htmlFor="input-features" className="leading-[17px]">Input Features</label>
          <Combo id="input-features" value="DrenajeDobleIGAC100kZE" />
          <label htmlFor="output-class" className="pt-1 leading-[17px]">Output Feature Class</label>
          <Combo id="output-class" value="DrenajeDobleIGAC100kZECenterline1" muted />
          <div className="flex h-6 items-center">
            Connecting Features
            <IconButton label="Add many" className="ml-0.5 size-[18px] rounded-full border border-[#707070]"><Caret /></IconButton>
          </div>
          <div className="flex">
            <span className="mr-3.5 h-[23px] w-1.5 bg-[#dedede]" />
            <div className="flex flex-1 flex-col gap-0.5">
              <Combo label="Connecting features 1" value="DrenajeSencilloIGAC100kZE" />
              <Combo label="Connecting features 2" value="" />
            </div>
          </div>
        </div>
        <div className="mb-1.5 mr-[5px] flex h-[26px] w-[86px] self-end rounded-sm border border-[#6b6b6b] bg-white text-[#333]">
          <button type="button" className="flex flex-1 items-center gap-2 pl-2.5 text-xs">
            <svg viewBox="0 0 16 16" className="size-4">
              <circle cx="8" cy="8" r="7.400" fill="#d3e9f8" stroke="#7dbbe6" />
              <path d="M5.500 4v8L12 8Z" fill="#3f93cf" />
            </svg>
            Run
          </button>
          <IconButton label="Run options" className="pr-0.5"><Caret className="size-2.5" /></IconButton>
        </div>
        <div className="mx-[3px] mb-0.5 flex h-12 items-center bg-[#e3efe2] pl-3 pr-1.5">
          <svg viewBox="0 0 12 12" className="size-3">
            <circle cx="6" cy="6" r="6" fill="#57a85c" />
            <path d="M3 6l2.200 2.200L9 4" fill="none" stroke="#fff" strokeWidth="1.600" />
          </svg>
          <div className="flex-1 pl-[18px] leading-[21px] text-[#555]">
            <div>Polygon To Centerline completed.</div>
            <div className="flex gap-2 text-[#5d9a62]">
              <a href="#details">View Details</a>
              <a href="#history">Open History</a>
            </div>
          </div>
          <IconButton label="Dismiss message" className="text-[#777]"><X className="size-3.5" /></IconButton>
        </div>
      </div>
      <div className="flex h-[22px] shrink-0">
        {DOCK_TABS.map((t) => (
          <button
            key={t}
            type="button"
            className={t === "Geoprocessing" ? "rounded-b-sm bg-[#f7f9f8] px-1.5 text-[#1f86cf]" : "px-[7px]"}
          >
            {t}
          </button>
        ))}
      </div>
    </aside>
  );
}

export default function App() {
  return (
    <div className="flex h-screen bg-[#f1f1f1] font-['Open_Sans','Noto_Sans',sans-serif]">
      <div className="w-2 shrink-0 pt-[50px]">
        <div className="h-[51px] border-y border-[#d0d0d0]" />
      </div>
      <div className="flex min-w-0 flex-1 flex-col pb-[5px]">
        <header className="bg-[#f7f9f8]">
          <TitleBar />
          <Ribbon />
        </header>
        <div className="flex min-h-0 flex-1 gap-2 border-b border-[#bdbdbd] bg-[#eaeaea] pb-1.5 pl-[5px] pr-[5px] pt-1.5">
          <Contents />
          <MapView />
          <Geoprocessing />
        </div>
      </div>
    </div>
  );
}
